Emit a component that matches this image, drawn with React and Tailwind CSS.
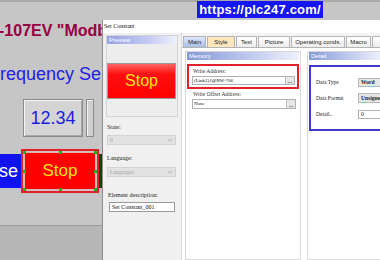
import React from "react";

const serif = "font-['Liberation_Serif','Times_New_Roman',serif]";

function Chevron() {
  return (
    <svg width="6" height="4" viewBox="0 0 6 4" className="shrink-0">
      <path d="M0.5 0.8 L3 3.2 L5.5 0.8" fill="none" stroke="#a8a8a8" strokeWidth="0.8" />
    </svg>
  );
}

function Handle({ cls }) {
  return <div className={"absolute w-[3px] h-[3px] bg-[#19b419] " + cls} />;
}

function GroupHeader({ children }) {
  return (
    <div className="h-[8px] flex items-center pl-[2px] bg-[linear-gradient(90deg,#8599d8,#c3cdf0_60%,#eef1fb)] text-white text-[6px] leading-[8px]">
      {children}
    </div>
  );
}

function Tab({ w, label, cls }) {
  return (
    <div
      className={
        "h-[11px] shrink-0 flex items-center justify-center border border-b-0 border-[#b4b4b4] text-[6px] leading-[8px] text-[#222] whitespace-nowrap overflow-hidden " +
        w +
        " " +
        cls
      }
    >
      {label}
    </div>
  );
}

export default function App() {
  return (
    <div className="relative w-[380px] h-[260px] overflow-hidden bg-[#c6c6c6] font-['Liberation_Sans',Arial,sans-serif]">
      {/* HMI screen */}
      <div className="flex flex-col h-full">
        <div className="h-[2px] bg-[#a9a9a9]" />
        <div className="mt-[20px] w-[102px] overflow-hidden text-[16px] leading-[18px] font-bold text-[#960044] whitespace-nowrap">
          <span className="ml-[-1px]">-107EV "Modb</span>
        </div>
        <div className="mt-[24px] w-[102px] overflow-hidden text-[18px] leading-[20px] text-[#2020e8] whitespace-nowrap">
          requency Se
        </div>
        <div className="mt-[15px] flex">
          <div className="ml-[23px] w-[60px] h-[38px] border border-[#8a8a8a] bg-[#d4d4d4] shadow-[inset_1px_1px_0_#f4f4f4,inset_-1px_-1px_0_#a8a8a8] flex items-center justify-center text-[18px] text-[#1c1ce0]">
            12.34
          </div>
          <div className="ml-[3px] w-[8px] h-[38px] border border-[#8a8a8a] bg-[#cfcfcf] shadow-[inset_1px_1px_0_#f4f4f4]" />
        </div>
        <div className="mt-[12px] flex items-center h-[44px]">
          <div className="w-[21px] h-[34px] bg-[#1212f0] flex items-center justify-end pr-[3px] text-white text-[18px] whitespace-nowrap">
            se
          </div>
          <div className="relative w-[78px] h-[44px] border-2 border-[#e5202a] p-[1px]">
            <div className="w-full h-full bg-[#ff0000] border border-[#dcb4b4] flex items-center justify-center text-[17px] text-[#ffe21a]">
              Stop
            </div>
            <Handle cls="left-0 top-0" />
            <Handle cls="left-[36px] top-0" />
            <Handle cls="left-[71px] top-0" />
            <Handle cls="left-0 top-[19px]" />
            <Handle cls="left-[71px] top-[19px]" />
            <Handle cls="left-0 top-[37px]" />
            <Handle cls="left-[36px] top-[37px]" />
            <Handle cls="left-[71px] top-[37px]" />
          </div>
          <div className="w-[4px] h-[34px] bg-[#0c470c]" />
        </div>
        <div className="mt-auto h-[35px] border-t border-[#9c9c9c] bg-[#b6b6b6]" />
      </div>

      {/* Watermark */}
      <div className="absolute left-[197px] top-[1px] w-[126px] h-[17px] bg-[#1616f2] flex items-center justify-center text-white font-bold text-[13px] leading-[17px] tracking-[0.2px]">
        https://plc247.com/
      </div>

      {/* Dialog window */}
      <div className="absolute left-[102px] top-[20px] right-0 bottom-0 flex flex-col bg-white border-l border-[#8c8c8c]">
        <div className={"h-[13px] shrink-0 flex items-center pl-[1px] text-[6px] text-[#111] " + serif}>
          Set Constant
        </div>
        <div className="flex flex-1 min-h-0">
          {/* Left pane */}
          <div className="w-[79px] shrink-0 bg-[#f0f0f0] border-r border-[#dadada] flex flex-col">
            <div className="ml-[3px] mt-[2px] w-[72px] h-[82px] border border-[#d4d4d4] bg-[#ededed] flex flex-col">
              <div className="h-[8px] flex items-center pl-[2px] bg-[linear-gradient(90deg,#97a2e6,#c6cbf3_60%,#eef0fc)] text-white text-[6px]">
                Preview
              </div>
              <div className="mt-[19px] w-[69px] h-[36px] border border-[#9a9a9a] bg-[linear-gradient(#ff6464,#ff1010_30%,#ff0000)] flex items-center justify-center text-[16px] text-[#ffe21a]">
                Stop
              </div>
            </div>
            <div className={"ml-[4px] mt-[6px] text-[6px] leading-[8px] text-[#222] " + serif}>State:</div>
            <div className={"ml-[4px] mt-[4px] w-[69px] h-[10px] bg-[#e2e2e2] border border-[#d2d2d2] flex items-center justify-between px-[2px] text-[5.5px] text-[#a0a0a0] " + serif}>
              <span>0</span>
              <Chevron />
            </div>
            <div className={"ml-[4px] mt-[9px] text-[6px] leading-[8px] text-[#222] " + serif}>Language:</div>
            <div className={"ml-[4px] mt-[5px] w-[69px] h-[10px] bg-[#e2e2e2] border border-[#d2d2d2] flex items-center justify-between px-[2px] text-[5.5px] text-[#a0a0a0] " + serif}>
              <span>Language1</span>
              <Chevron />
            </div>
            <div className={"ml-[5px] mt-[14px] text-[6px] leading-[8px] text-[#222] " + serif}>Element description:</div>
            <div className={"ml-[6px] mt-[3px] w-[66px] h-[10px] bg-white border border-[#9a9a9a] flex items-center px-[2px] text-[6px] text-[#111] whitespace-nowrap " + serif}>
              Set Constant_001
            </div>
          </div>

          {/* Right pane */}
          <div className="flex-1 min-w-0 flex flex-col bg-[#f3f3f3]">
            <div className="mt-[3px] ml-[1px] flex gap-[1px] h-[11px]">
              <Tab w="w-[23px]" label="Main" cls="bg-[linear-gradient(#dde6f8,#a9bde8)]" />
              <Tab w="w-[28px]" label="Style" cls="bg-[#fde5bc]" />
              <Tab w="w-[21px]" label="Text" cls="bg-[linear-gradient(#ffffff,#ececec)]" />
              <Tab w="w-[32px]" label="Picture" cls="bg-[linear-gradient(#ffffff,#ececec)]" />
              <Tab w="w-[54px]" label="Operating conds." cls="bg-[linear-gradient(#ffffff,#ececec)]" />
              <Tab w="w-[25px]" label="Macro" cls="bg-[linear-gradient(#ffffff,#ececec)]" />
              <Tab w="w-[30px]" label="" cls="bg-[linear-gradient(#ffffff,#ececec)]" />
            </div>
            <div className="flex-1 bg-white border-t border-[#b4b4b4] flex gap-[6px] pt-[3px] pl-[3px]">
              {/* Memory group */}
              <div className="w-[116px] shrink-0 border border-[#d8d8d8] flex flex-col px-[1px]">
                <GroupHeader>Memory</GroupHeader>
                <div className="mt-[4px] h-[25px] border-2 border-[#e3212a] flex flex-col pl-[3px] pr-[2px]">
                  <div className={"ml-[1px] mt-[2px] text-[5.5px] leading-[7px] text-[#333] " + serif}>Write Address:</div>
                  <div className={"mt-[1px] h-[9px] bg-white border border-[#b0b0b0] flex items-center text-[5px] text-[#111] " + serif}>
                    <span className="flex-1 pl-[1px] whitespace-nowrap">(Link2)1@RW-706</span>
                    <span className="w-[9px] h-full bg-[#e6e6e6] border-l border-[#bbbbbb] flex items-end justify-center text-[6px] leading-[6px] font-bold text-[#444]">...</span>
                  </div>
                </div>
                <div className={"ml-[6px] mt-[2px] text-[5.5px] leading-[7px] text-[#333] " + serif}>Write Offset Address:</div>
                <div className={"ml-[5px] mt-[1px] w-[104px] h-[10px] bg-white border border-[#b0b0b0] flex items-center text-[5px] text-[#111] " + serif}>
                  <span className="flex-1 pl-[1px]">None</span>
                  <span className="w-[9px] h-full bg-[#e6e6e6] border-l border-[#bbbbbb] flex items-end justify-center text-[6px] leading-[6px] font-bold text-[#444]">...</span>
                </div>
              </div>
              {/* Detail group */}
              <div className="flex-1 min-w-0 border border-r-0 border-[#d8d8d8] flex flex-col pl-[1px]">
                <GroupHeader>Detail</GroupHeader>
                <div className={"mt-[5px] h-[66px] border-2 border-r-0 border-[#3c3cc8] flex flex-col pl-[5px] pt-[11px] text-[5.5px] text-[#222] " + serif}>
                  <div className="flex items-center h-[9px]">
                    <span className="w-[42px] shrink-0">Data Type</span>
                    <div className="flex-1 h-[9px] bg-[#e6e6e6] border border-r-0 border-[#b8b8b8] flex items-center pl-[2px] font-bold">Word</div>
                  </div>
                  <div className="flex items-center h-[10px] mt-[6px]">
                    <span className="w-[42px] shrink-0">Data Format</span>
                    <div className="flex-1 h-[10px] bg-[#e6e6e6] border border-r-0 border-[#b8b8b8] flex items-center pl-[2px] font-bold whitespace-nowrap overflow-hidden">Unsigne</div>
                  </div>
                  <div className="flex items-center h-[9px] mt-[7px]">
                    <span className="w-[42px] shrink-0">Detail..</span>
                    <div className="flex-1 h-[9px] bg-white border border-r-0 border-[#b0b0b0] flex items-center pl-[2px]">0</div>
                  </div>
                </div>
              </div>
            </div>
          </div>
        </div>
      </div>
    </div>
  );
}
